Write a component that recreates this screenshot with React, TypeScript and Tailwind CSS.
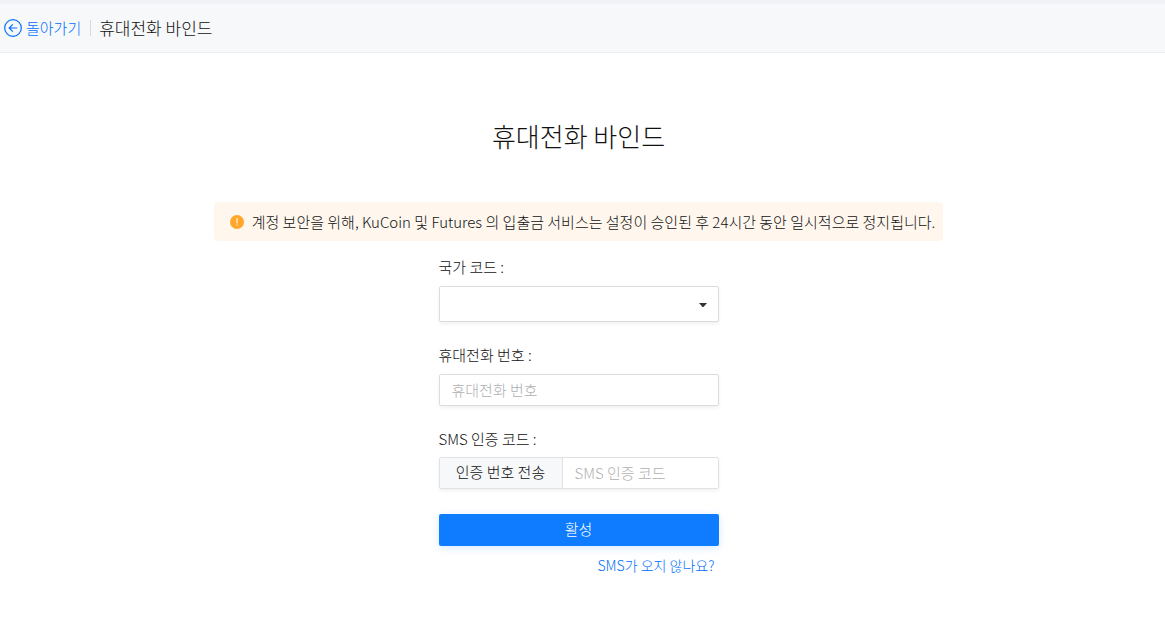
import { useState } from "react"

const BackIcon = () => (
  <svg width="18" height="18" viewBox="0 0 18 18" fill="none" stroke="currentColor" aria-hidden="true">
    <circle cx="9" cy="9" r="8.3" strokeWidth="1.2" />
    <path d="M13.2 9H5.2M8.8 5.4L5.2 9l3.6 3.6" strokeWidth="1.2" />
  </svg>
)

const WarningIcon = () => (
  <svg width="14" height="14" viewBox="0 0 14 14" className="shrink-0" aria-hidden="true">
    <circle cx="7" cy="7" r="7" fill="#ffa62b" />
    <path d="M7 3v5.4M7 9.6v1.2" stroke="#fff3dd" strokeWidth="1.2" />
  </svg>
)

const Header = () => (
  <header className="flex h-[53px] items-center border-t-4 border-b border-t-[#f1f2f6] border-b-[#ebedf0] bg-[#f7f8fa] pl-1">
    <a href="#back" className="flex items-center gap-1 text-[15px] text-[#0070ff]">
      <BackIcon />
      돌아가기
    </a>
    <span className="mr-2 ml-[9px] h-4 w-px bg-[#d5d8dd]" />
    <span className="text-[17px]">휴대전화 바인드</span>
  </header>
)

export default function App() {
  const [phone, setPhone] = useState("")
  const [code, setCode] = useState("")

  return (
    <div className="bg-white font-['Noto_Sans_CJK_KR',sans-serif] font-light text-[#111]">
      <Header />

      <main className="flex flex-col items-center pt-[63px] pr-2 pb-12">
        <h1 className="text-[26px] leading-10">휴대전화 바인드</h1>

        <div
          role="alert"
          className="mt-[46px] flex items-center gap-2 rounded bg-[#fff7ee] py-2 pr-2 pl-4 text-[15px] leading-[23px]"
        >
          <WarningIcon />
          <p>계정 보안을 위해, KuCoin 및 Futures 의 입출금 서비스는 설정이 승인된 후 24시간 동안 일시적으로 정지됩니다.</p>
        </div>

        <form className="mt-4 flex w-[280px] flex-col text-[15px]" onSubmit={(e) => e.preventDefault()}>
          <label htmlFor="country" className="leading-5">국가 코드 :</label>
          <div className="relative mt-[9px]">
            <select
              id="country"
              className="block h-9 w-full appearance-none rounded-xs border border-[#dcdcdf] bg-white px-3 shadow-[0_2px_4px_rgba(0,0,0,0.06)] outline-none"
            />
            <svg
              width="8"
              height="4"
              viewBox="0 0 8 4"
              className="pointer-events-none absolute top-[17px] right-3 fill-[#333]"
              aria-hidden="true"
            >
              <path d="M0 0h8L4.5 4h-1z" />
            </svg>
          </div>

          <label htmlFor="phone" className="mt-[23px] leading-5">휴대전화 번호 :</label>
          <input
            id="phone"
            value={phone}
            onChange={(e) => setPhone(e.target.value)}
            placeholder="휴대전화 번호"
            className="mt-[9px] h-8 rounded-xs border border-[#dcdcdf] px-3 pb-0.5 shadow-[0_2px_4px_rgba(0,0,0,0.06)] outline-none placeholder:text-[#b0b0b0]"
          />

          <label htmlFor="code" className="mt-[23px] leading-5">SMS 인증 코드 :</label>
          <div className="mt-2 flex h-8 rounded-xs border border-[#e0e2e6] shadow-[0_2px_4px_rgba(0,0,0,0.06)]">
            <button type="button" className="w-[123px] shrink-0 border-r border-[#e0e2e6] bg-[#f7f8fa] pb-0.5">
              인증 번호 전송
            </button>
            <input
              id="code"
              value={code}
              onChange={(e) => setCode(e.target.value)}
              placeholder="SMS 인증 코드"
              className="min-w-0 grow px-3 outline-none placeholder:text-[#b0b0b0]"
            />
          </div>

          <button
            type="submit"
            className="mt-[25px] h-8 rounded-xs bg-[#0f7cff] pb-0.5 text-white shadow-[0_2px_8px_rgba(15,124,255,0.16)]"
          >
            활성
          </button>
          <a href="#help" className="mt-[9px] mr-1 self-end text-[14px] leading-5 text-[#0070ff]">
            SMS가 오지 않나요?
          </a>
        </form>
      </main>
    </div>
  )
}
